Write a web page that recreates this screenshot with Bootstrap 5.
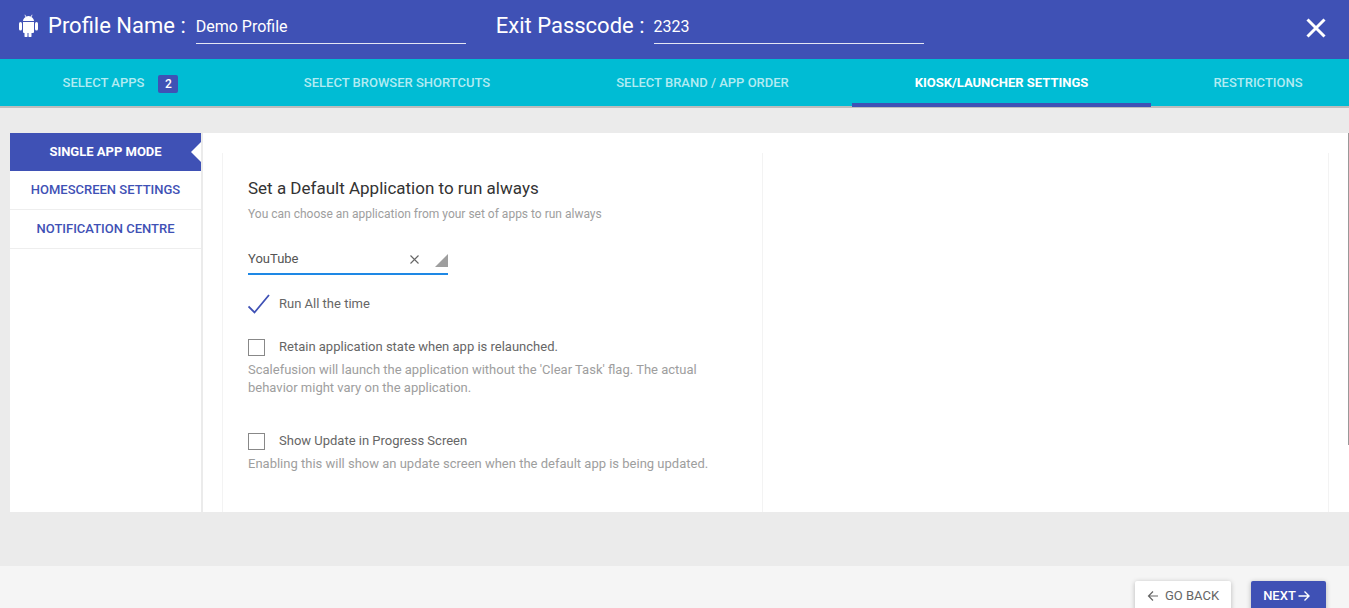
<!DOCTYPE html>
<html lang="en">
<head>
<meta charset="utf-8">
<title>Profile</title>
<link href="https://cdn.jsdelivr.net/npm/bootstrap@5.3.0/dist/css/bootstrap.min.css" rel="stylesheet">
<style>
html,body{height:608px;overflow:hidden}
body{font-family:Roboto,"Liberation Sans",sans-serif;background:#ebebeb;color:#666}
.top-bar{height:59px;background:#3f51b5;color:#fff;padding-left:18px;padding-bottom:8px}
.top-icon{margin-right:9px;flex:none}
.top-label{font-size:22px;line-height:26px;white-space:nowrap}
.top-value{font-size:16px;line-height:20px;border-bottom:1px solid #e4e6f4;height:33px;padding-top:6px;width:270px;margin-left:10px;margin-top:3px}
.exit-group{margin-left:30px}
.exit-group .top-value{margin-left:9px}
.close-x{margin-left:auto;margin-right:23px;line-height:0;margin-top:4px}
.tab-bar{height:49px;background:#00bcd4;border-bottom:2px solid #bdbdbd}
.tab-cell{height:48px;font-size:13px;font-weight:500;color:#b2ebf2;white-space:nowrap;flex:none}
.tab-on{color:#fff;font-weight:700;border-bottom:4px solid #3f51b5;padding-top:4px}
.tab-num{background:#3f51b5;color:#fff;font-size:12px;width:20px;height:18px;border-radius:2px;margin-left:14px;margin-top:2px}
.work{height:458px;padding-top:25px}
.panel-row{height:379px;padding-left:10px}
.side{width:191px;background:#fff;flex:none}
.side-item{font-size:13px;font-weight:500;color:#3f51b5;height:39px;border-bottom:1px solid #eee}
.side-on{height:38px;background:#3f51b5;color:#fff;font-weight:700;border:0;position:relative}
.side-on::after{content:"";position:absolute;right:0;top:9px;border:10px solid transparent;border-left:0;border-right-color:#fff}
.main-area{margin-left:2px;background:#fff;flex:1;padding-top:20px;padding-left:19px;height:379px;position:relative}
.main-area::after{content:"";position:absolute;right:0;top:0;width:1px;height:312px;background:#999}
.form-col{width:541px;height:359px;border-left:1px solid #f3f3f3;border-right:1px solid #f3f3f3;padding:25px 25px 0 25px}
.blank-col{width:566px;height:359px;border-right:1px solid #f3f3f3}
.form-title{font-size:17px;line-height:20px;color:#333;margin:0}
.hint{font-size:13px;line-height:18px;color:#9e9e9e;margin:0}
.hint-sm{font-size:12px;margin-top:7px}
.pick{width:200px;height:30px;border-bottom:2px solid #1e88e5;margin-top:22px;font-size:13px;color:#555}
.pick-x{margin-left:auto;margin-right:16px;line-height:0}
.pick-arrow{width:0;height:0;border-style:solid;border-width:0 0 13px 13px;border-color:transparent transparent #9e9e9e transparent;margin-top:3px}
.opt{font-size:13px;line-height:18px;color:#666}
.box{width:17px;height:17px;border:1px solid #888;margin-right:14px;flex:none}
.tick{width:22px;margin-right:9px;flex:none;line-height:0}
.foot{height:42px;background:#f5f5f5;padding-top:15px;padding-right:23px}
.btn-back,.btn-next{height:40px;padding:9px 0 0 0;font-size:13px;line-height:12px;border-radius:2px;box-shadow:0 1px 5px rgba(0,0,0,.25);border:0;display:flex;justify-content:center;gap:6px}
.btn-back{width:96px;background:#fff;color:#666;margin-right:20px}
.btn-next{width:75px;background:#3f51b5;color:#fff;font-weight:500;gap:2px;padding-right:4px}
</style>
</head>
<body>
<div class="top-bar d-flex align-items-center">
  <svg width="21" height="23" viewBox="0 0 21 23" fill="#fff" class="top-icon"><path d="M5 8h11v10a1 1 0 0 1-1 1h-1.500v3a1.400 1.400 0 0 1-3 0v-3h-.999v3a1.400 1.400 0 0 1-3 0v-3H6a1 1 0 0 1-1-1z"/><rect x="1" y="8" width="3" height="8.500" rx="1.500"/><rect x="17" y="8" width="3" height="8.500" rx="1.500"/><path d="M5 7c.1-1.900 1.100-3.300 2.600-4.100L6.500 1l.5-.4 1.200 1.900a6 6 0 0 1 4.600 0L14 .6l.5.400-1.100 1.900C14.900 3.700 15.900 5.100 16 7z"/></svg>
  <span class="top-label">Profile Name :</span>
  <div class="top-value">Demo Profile</div>
  <div class="exit-group d-flex align-items-center">
    <span class="top-label">Exit Passcode :</span>
    <div class="top-value">2323</div>
  </div>
  <div class="close-x"><svg width="20" height="20" viewBox="0 0 20 20"><path d="M1.500 1.500l17 17M18.500 1.500l-17 17" stroke="#fff" stroke-width="3" fill="none"/></svg></div>
</div>
<div class="tab-bar d-flex">
  <div class="tab-cell d-flex align-items-center justify-content-center" style="width:241px"><span>SELECT APPS</span><span class="tab-num d-flex align-items-center justify-content-center">2</span></div>
  <div class="tab-cell d-flex align-items-center justify-content-center" style="width:312px">SELECT BROWSER SHORTCUTS</div>
  <div class="tab-cell d-flex align-items-center justify-content-center" style="width:299px">SELECT BRAND / APP ORDER</div>
  <div class="tab-cell tab-on d-flex align-items-center justify-content-center" style="width:299px">KIOSK/LAUNCHER SETTINGS</div>
  <div class="tab-cell d-flex align-items-center justify-content-center ps-3" style="width:198px">RESTRICTIONS</div>
</div>
<div class="work">
  <div class="panel-row d-flex">
    <div class="side">
      <div class="side-item side-on d-flex align-items-center justify-content-center">SINGLE APP MODE</div>
      <div class="side-item d-flex align-items-center justify-content-center">HOMESCREEN SETTINGS</div>
      <div class="side-item d-flex align-items-center justify-content-center">NOTIFICATION CENTRE</div>
    </div>
    <div class="main-area d-flex">
      <div class="form-col">
        <p class="form-title">Set a Default Application to run always</p>
        <p class="hint hint-sm">You can choose an application from your set of apps to run always</p>
        <div class="pick d-flex align-items-center">
          <span>YouTube</span>
          <span class="pick-x"><svg width="9" height="9" viewBox="0 0 9 9"><path d="M.5.500l8 8M8.500.500l-8 8" stroke="#666" stroke-width="1.100" fill="none"/></svg></span>
          <span class="pick-arrow"></span>
        </div>
        <div class="opt d-flex align-items-center" style="margin-top:18px;height:22px">
          <span class="tick"><svg width="22" height="20" viewBox="0 0 22 20"><path d="M.5 12.500l6 6L21 1" stroke="#3f51b5" stroke-width="1.800" fill="none"/></svg></span>
          <span>Run All the time</span>
        </div>
        <div class="opt d-flex align-items-center" style="margin-top:23px;height:18px">
          <span class="box"></span><span>Retain application state when app is relaunched.</span>
        </div>
        <p class="hint" style="margin-top:5px;width:470px">Scalefusion will launch the application without the 'Clear Task' flag. The actual behavior might vary on the application.</p>
        <div class="opt d-flex align-items-center" style="margin-top:35px;height:18px">
          <span class="box"></span><span>Show Update in Progress Screen</span>
        </div>
        <p class="hint" style="margin-top:5px">Enabling this will show an update screen when the default app is being updated.</p>
      </div>
      <div class="blank-col"></div>
    </div>
  </div>
</div>
<div class="foot d-flex justify-content-end">
  <button class="btn-back" type="button"><svg width="12" height="12" viewBox="0 0 12 12"><path d="M11 6H1.500M6 1.500L1.500 6 6 10.500" stroke="#666" stroke-width="1.200" fill="none"/></svg><span>GO BACK</span></button>
  <button class="btn-next" type="button"><span>NEXT</span><svg width="12" height="12" viewBox="0 0 12 12"><path d="M.5 6h10.500M6.500 1.500L11 6 6.500 10.500" stroke="#fff" stroke-width="1.400" fill="none"/></svg></button>
</div>
</body>
</html>
